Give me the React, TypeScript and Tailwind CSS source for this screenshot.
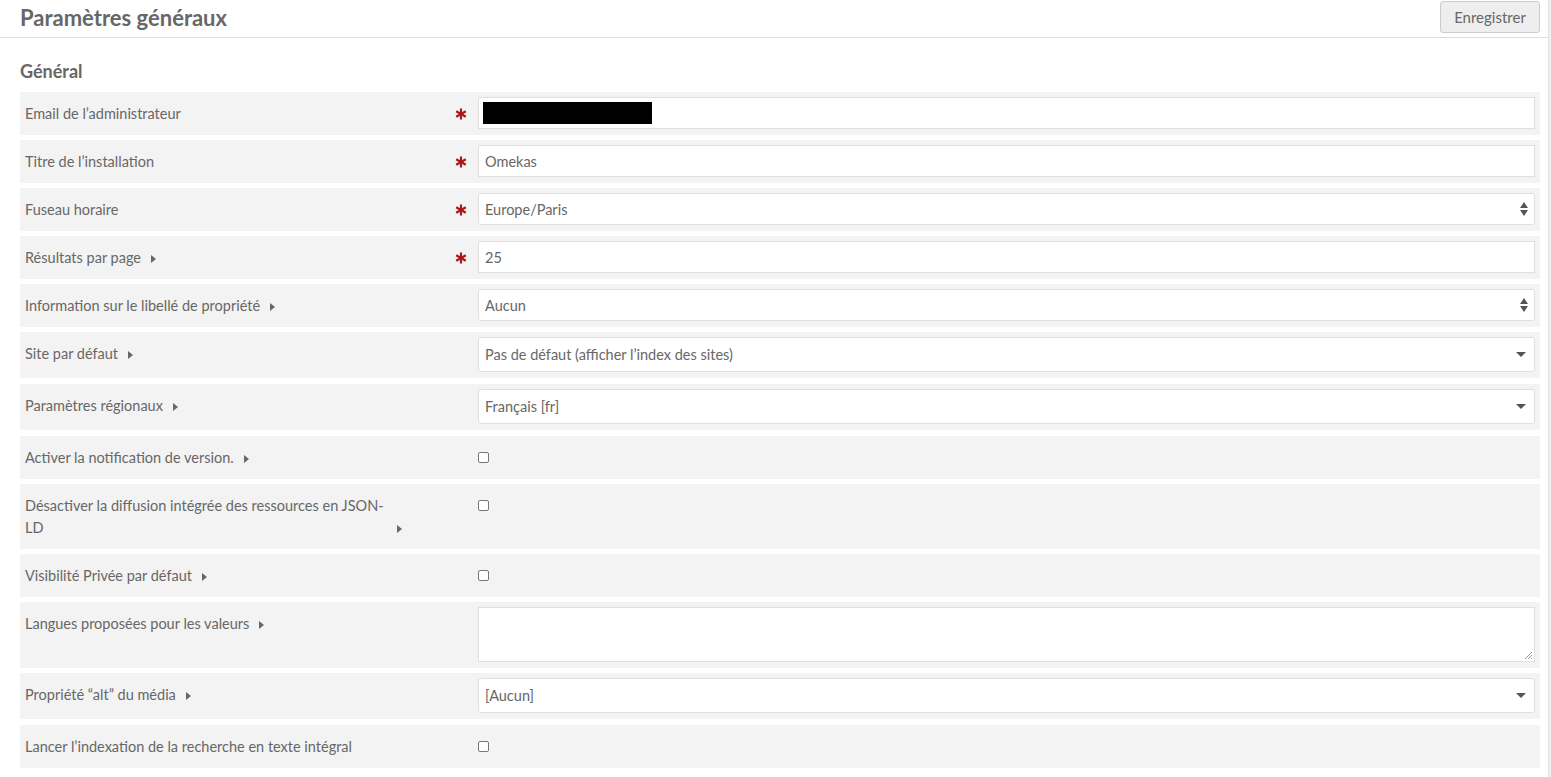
import React from 'react';

type Field =
  | { label: string; help?: boolean; required?: boolean; kind: 'text'; value?: string; redacted?: boolean }
  | { label: string; help?: boolean; required?: boolean; kind: 'select'; value: string }
  | { label: string; help?: boolean; required?: boolean; kind: 'chosen'; value: string }
  | { label: string; help?: boolean; required?: boolean; kind: 'checkbox' }
  | { label: string; help?: boolean; required?: boolean; kind: 'textarea' };

const fields: Field[] = [
  { label: 'Email de l’administrateur', required: true, kind: 'text', redacted: true },
  { label: 'Titre de l’installation', required: true, kind: 'text', value: 'Omekas' },
  { label: 'Fuseau horaire', required: true, kind: 'select', value: 'Europe/Paris' },
  { label: 'Résultats par page', help: true, required: true, kind: 'text', value: '25' },
  { label: 'Information sur le libellé de propriété', help: true, kind: 'select', value: 'Aucun' },
  { label: 'Site par défaut', help: true, kind: 'chosen', value: 'Pas de défaut (afficher l’index des sites)' },
  { label: 'Paramètres régionaux', help: true, kind: 'chosen', value: 'Français [fr]' },
  { label: 'Activer la notification de version.', help: true, kind: 'checkbox' },
  { label: 'Désactiver la diffusion intégrée des ressources en JSON-LD', help: true, kind: 'checkbox' },
  { label: 'Visibilité Privée par défaut', help: true, kind: 'checkbox' },
  { label: 'Langues proposées pour les valeurs', help: true, kind: 'textarea' },
  { label: 'Propriété “alt” du média', help: true, kind: 'chosen', value: '[Aucun]' },
  { label: 'Lancer l’indexation de la recherche en texte intégral', kind: 'checkbox' },
];

function Caret() {
  return (
    <svg width="5" height="8" viewBox="0 0 5 8" className="inline-block ml-[10px]">
      <path d="M0 0 L5 4 L0 8 Z" fill="#676767" />
    </svg>
  );
}

// heavy six-spoke asterisk marking required fields
function Required() {
  return (
    <svg width="12" height="12" viewBox="0 0 12 12" className="shrink-0 mt-[11px] mr-[11px]">
      <g stroke="#a91919" strokeWidth="2.2" strokeLinecap="butt">
        <path d="M6 0.5 L6 11.5" />
        <path d="M1.2 3.2 L10.8 8.8" />
        <path d="M1.2 8.8 L10.8 3.2" />
      </g>
    </svg>
  );
}

function UpDown() {
  return (
    <svg width="8" height="14" viewBox="0 0 8 14">
      <path d="M4 0 L8 6 L0 6 Z" fill="#555" />
      <path d="M0 8 L8 8 L4 14 Z" fill="#555" />
    </svg>
  );
}

function Down() {
  return (
    <svg width="10" height="5" viewBox="0 0 10 5">
      <path d="M0 0 L10 0 L5 5 Z" fill="#555" />
    </svg>
  );
}

function Input({ field }: { field: Field }) {
  switch (field.kind) {
    case 'text':
      return (
        <div className="h-[32px] bg-white border border-[#dfdfdf] flex items-center px-[6px]">
          {field.redacted ? <div className="w-[169px] h-[22px] bg-black -ml-[2px]" /> : <span className="pt-[2px]">{field.value}</span>}
        </div>
      );
    case 'select':
      return (
        <div className="h-[32px] bg-white border border-[#dfdfdf] rounded-[3px] flex items-center justify-between pl-[6px] pr-[6px]">
          <span className="pt-[2px]">{field.value}</span>
          <UpDown />
        </div>
      );
    case 'chosen':
      return (
        <div className="h-[35px] bg-white border border-[#dfdfdf] rounded-[3px] flex items-center justify-between pl-[6px] pr-[8px]">
          <span className="pt-[1px]">{field.value}</span>
          <Down />
        </div>
      );
    case 'checkbox':
      return <div className="mt-[11px] w-[11px] h-[11px] border border-[#767676] rounded-[2px] bg-white" />;
    case 'textarea':
      return (
        <div className="relative h-[55px] bg-white border border-[#dfdfdf]">
          <svg width="9" height="9" viewBox="0 0 9 9" className="absolute right-[1px] bottom-[1px]">
            <path d="M8 1 L1 8 M8 4 L4 8 M8 7 L7 8" stroke="#999" strokeWidth="1" />
          </svg>
        </div>
      );
  }
}

function Row({ field }: { field: Field }) {
  const chosen = field.kind === 'chosen';
  return (
    <div className={`flex bg-[#f3f3f3] pt-[5px] pb-[6px] px-[5px] ${chosen ? 'mb-[1px]' : ''}`}>
      <div className="w-[30%] shrink-0 flex items-start">
        <div className="flex-1 pt-[6px] pb-[4px] leading-[22px]">
          <span className="inline-block max-w-[362px]">{field.label}</span>
          {field.help && <Caret />}
        </div>
        {field.required && <Required />}
      </div>
      <div className="flex-1">
        <Input field={field} />
      </div>
    </div>
  );
}

export default function App() {
  return (
    <div
      className="w-full h-screen flex bg-white text-[#676767] text-[14.5px] overflow-hidden"
      style={{ fontFamily: 'Lato, "Open Sans", sans-serif' }}
    >
      <div className="flex-1 flex flex-col">
        <header className="h-[38px] shrink-0 border-b border-[#dddddd] flex items-center justify-between pl-[20px] pr-[8px]">
          <h1 className="text-[22px] font-bold -mt-[2px]">Paramètres généraux</h1>
          <button className="self-start mt-[1px] h-[32px] w-[100px] bg-[#eeeeee] border border-[#cccccc] rounded-[3px] text-[15px] text-[#676767]">
            Enregistrer
          </button>
        </header>
        <main className="px-[20px] pr-[8px]">
          <h2 className="text-[18px] font-bold leading-[24px] mt-[21px] mb-[9px]">Général</h2>
          <div className="flex flex-col gap-[5px]">
            {fields.map((f) => (
              <Row key={f.label} field={f} />
            ))}
          </div>
        </main>
      </div>
      <div className="w-[3px] bg-[#f1f1f1] border-l border-[#e3e3e3]" />
    </div>
  );
}
